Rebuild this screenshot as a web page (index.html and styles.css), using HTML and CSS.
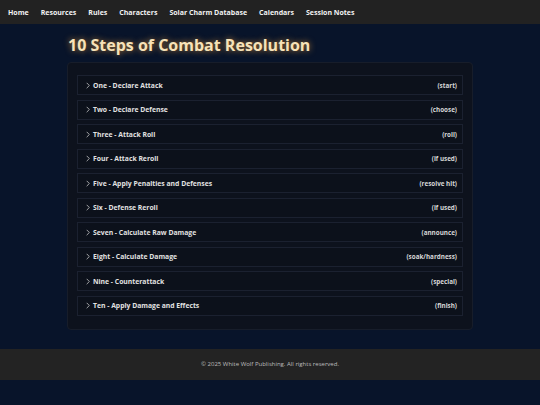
FILE: index.html
```html
<!DOCTYPE html>
<html>
<head>
<meta charset="utf-8">
<link rel="stylesheet" href="styles.css">
</head>
<body>
<nav class="nav">
  <a class="nav-link">Home</a>
  <a class="nav-link">Resources</a>
  <a class="nav-link">Rules</a>
  <a class="nav-link">Characters</a>
  <a class="nav-link">Solar Charm Database</a>
  <a class="nav-link">Calendars</a>
  <a class="nav-link">Session Notes</a>
</nav>
<main class="main">
  <h1 class="title">10 Steps of Combat Resolution</h1>
  <section class="panel">
    <div class="step"><span class="step-name"><svg class="chev" viewBox="0 0 6 10"><path d="M1 1 L5 5 L1 9"/></svg>One - Declare Attack</span><span class="step-note">(start)</span></div>
    <div class="step"><span class="step-name"><svg class="chev" viewBox="0 0 6 10"><path d="M1 1 L5 5 L1 9"/></svg>Two - Declare Defense</span><span class="step-note">(choose)</span></div>
    <div class="step"><span class="step-name"><svg class="chev" viewBox="0 0 6 10"><path d="M1 1 L5 5 L1 9"/></svg>Three - Attack Roll</span><span class="step-note">(roll)</span></div>
    <div class="step"><span class="step-name"><svg class="chev" viewBox="0 0 6 10"><path d="M1 1 L5 5 L1 9"/></svg>Four - Attack Reroll</span><span class="step-note">(if used)</span></div>
    <div class="step"><span class="step-name"><svg class="chev" viewBox="0 0 6 10"><path d="M1 1 L5 5 L1 9"/></svg>Five - Apply Penalties and Defenses</span><span class="step-note">(resolve hit)</span></div>
    <div class="step"><span class="step-name"><svg class="chev" viewBox="0 0 6 10"><path d="M1 1 L5 5 L1 9"/></svg>Six - Defense Reroll</span><span class="step-note">(if used)</span></div>
    <div class="step"><span class="step-name"><svg class="chev" viewBox="0 0 6 10"><path d="M1 1 L5 5 L1 9"/></svg>Seven - Calculate Raw Damage</span><span class="step-note">(announce)</span></div>
    <div class="step"><span class="step-name"><svg class="chev" viewBox="0 0 6 10"><path d="M1 1 L5 5 L1 9"/></svg>Eight - Calculate Damage</span><span class="step-note">(soak/hardness)</span></div>
    <div class="step"><span class="step-name"><svg class="chev" viewBox="0 0 6 10"><path d="M1 1 L5 5 L1 9"/></svg>Nine - Counterattack</span><span class="step-note">(special)</span></div>
    <div class="step"><span class="step-name"><svg class="chev" viewBox="0 0 6 10"><path d="M1 1 L5 5 L1 9"/></svg>Ten - Apply Damage and Effects</span><span class="step-note">(finish)</span></div>
  </section>
</main>
<footer class="footer">© 2025 White Wolf Publishing. All rights reserved.</footer>
</body>
</html>
```
FILE: styles.css
```css
html, body {
  margin: 0;
  padding: 0;
}
body {
  background: #08142a;
  font-family: "Open Sans", "Noto Sans", sans-serif;
  color: #e6e6e6;
  min-height: 405px;
}
.nav {
  display: flex;
  align-items: center;
  gap: 12px;
  height: 24px;
  padding: 0 8px;
  background: #222222;
  box-sizing: border-box;
}
.nav-link {
  color: #f2f2f2;
  font-size: 7px;
  font-weight: 700;
}
.main {
  width: 406px;
  margin: 0 auto;
  padding: 9px 0 19px 0;
}
.title {
  margin: 0 0 5px 1px;
  font-size: 16px;
  font-weight: 700;
  color: #f7e2b8;
  line-height: 24px;
  text-shadow: 0 0 6px rgba(255, 170, 60, 0.7);
}
.panel {
  background: #0d121d;
  border: 1px solid #171d2a;
  border-radius: 4px;
  padding: 12px 9px 13px 9px;
  display: flex;
  flex-direction: column;
  gap: 4.5px;
}
.step {
  display: flex;
  justify-content: space-between;
  align-items: center;
  height: 20px;
  box-sizing: border-box;
  border: 1px solid #1b2130;
  background: #0c111b;
  padding: 0 5px 0 8px;
}
.step-name {
  display: flex;
  align-items: center;
  font-size: 6.8px;
  font-weight: 700;
  color: #e2e2e2;
}
.chev {
  width: 4px;
  height: 7px;
  margin-right: 3px;
  fill: none;
  stroke: #d8d8d8;
  stroke-width: 1.1;
}
.step-note {
  font-size: 6.3px;
  font-weight: 700;
  color: #d6d6d6;
}
.footer {
  background: #232323;
  height: 31px;
  display: flex;
  align-items: center;
  justify-content: center;
  font-size: 6px;
  color: #bdbdbd;
}
```
